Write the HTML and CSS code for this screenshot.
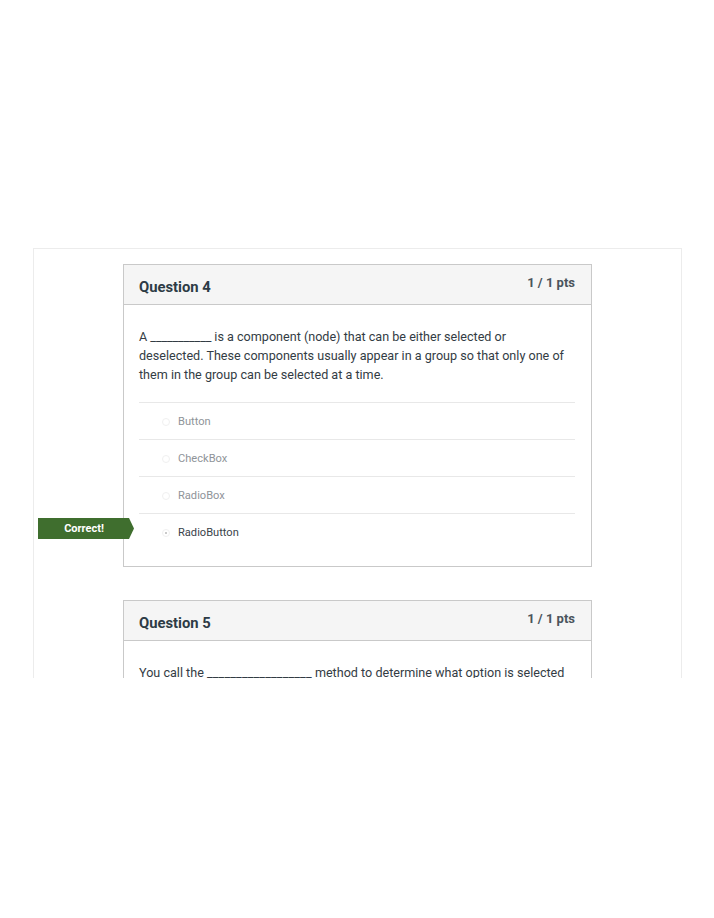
FILE: index.html
```html
<!DOCTYPE html>
<html>
<head>
<meta charset="utf-8">
<link rel="stylesheet" href="styles.css">
</head>
<body>
<div class="page">
  <div class="panel">
    <div class="card">
      <div class="card-head">
        <h2 class="q-title">Question 4</h2>
        <div class="q-pts">1 / 1 pts</div>
      </div>
      <div class="card-body">
        <p class="q-text">A <span class="blank b1">___________</span> is a component (node) that can be either selected or<br>deselected. These components usually appear in a group so that only one of them in the group can be selected at a time.</p>
        <ul class="answers">
          <li class="answer"><span class="radio"></span><span class="a-text">Button</span></li>
          <li class="answer"><span class="radio"></span><span class="a-text">CheckBox</span></li>
          <li class="answer"><span class="radio"></span><span class="a-text">RadioBox</span></li>
          <li class="answer selected">
            <span class="badge">Correct!</span>
            <span class="radio checked"></span><span class="a-text">RadioButton</span>
          </li>
        </ul>
      </div>
    </div>
    <div class="card">
      <div class="card-head">
        <h2 class="q-title">Question 5</h2>
        <div class="q-pts">1 / 1 pts</div>
      </div>
      <div class="card-body">
        <p class="q-text">You call the <span class="blank b2">__________________</span> method to determine what option is selected in a group of RadioButton components.</p>
      </div>
    </div>
  </div>
</div>
</body>
</html>
```

FILE: styles.css
```css
html, body {
  margin: 0;
  padding: 0;
  background: #ffffff;
}
body {
  font-family: Roboto, "Liberation Sans", Arial, sans-serif;
  color: #2d3b45;
}
.page {
  width: 714px;
  height: 918px;
  padding-top: 248px;
  box-sizing: border-box;
}
.panel {
  margin-left: 33px;
  width: 649px;
  height: 430px;
  box-sizing: border-box;
  border: 1px solid #ececec;
  border-bottom: none;
  overflow: hidden;
  padding: 15px 0 0 89px;
}
.card {
  width: 469px;
  box-sizing: border-box;
  border: 1px solid #c9c9c9;
  margin-bottom: 33px;
  background: #fff;
}
.card-head {
  height: 39px;
  background: #f5f5f5;
  border-bottom: 1px solid #c9c9c9;
  display: flex;
  justify-content: space-between;
  align-items: flex-start;
  padding: 0 16px 0 15px;
}
.q-title {
  margin: 0;
  padding-top: 13px;
  font-size: 14.8px;
  line-height: 18px;
  font-weight: 700;
  color: #2d3b45;
}
.q-pts {
  padding-top: 10px;
  font-size: 13px;
  line-height: 16px;
  font-weight: 700;
  color: #4a545c;
}
.card-body {
  padding: 22px 16px 16px 15px;
}
.q-text {
  margin: 0 0 18px 0;
  font-size: 12.6px;
  line-height: 19px;
  color: #333c44;
}
.b1 { letter-spacing: -0.15px; }
.b2 { letter-spacing: 0.14px; }
.answers {
  list-style: none;
  margin: 0;
  padding: 0;
}
.answer {
  position: relative;
  height: 35px;
  border-top: 1px solid #e8e8e8;
  display: flex;
  align-items: center;
  padding-left: 23px;
  padding-top: 1px;
}
.radio {
  width: 8px;
  height: 8px;
  border: 1px solid #f0f0f0;
  border-radius: 50%;
  box-sizing: border-box;
  margin-right: 8px;
  position: relative;
}
.radio.checked::after {
  content: "";
  position: absolute;
  left: 2px;
  top: 2px;
  width: 2px;
  height: 2px;
  border-radius: 50%;
  background: #b8b8b8;
}
.a-text {
  font-size: 11.1px;
  color: #8f9499;
}
.answer.selected .a-text {
  color: #3a434a;
}
.badge {
  position: absolute;
  left: -101px;
  top: 4px;
  width: 96px;
  height: 21px;
  background: #3f6e2e;
  color: #ffffff;
  font-size: 11px;
  font-weight: 700;
  line-height: 21px;
  text-align: center;
  box-sizing: border-box;
  padding-right: 4px;
  clip-path: polygon(0 0, 91px 0, 100% 50%, 91px 100%, 0 100%);
}
```
